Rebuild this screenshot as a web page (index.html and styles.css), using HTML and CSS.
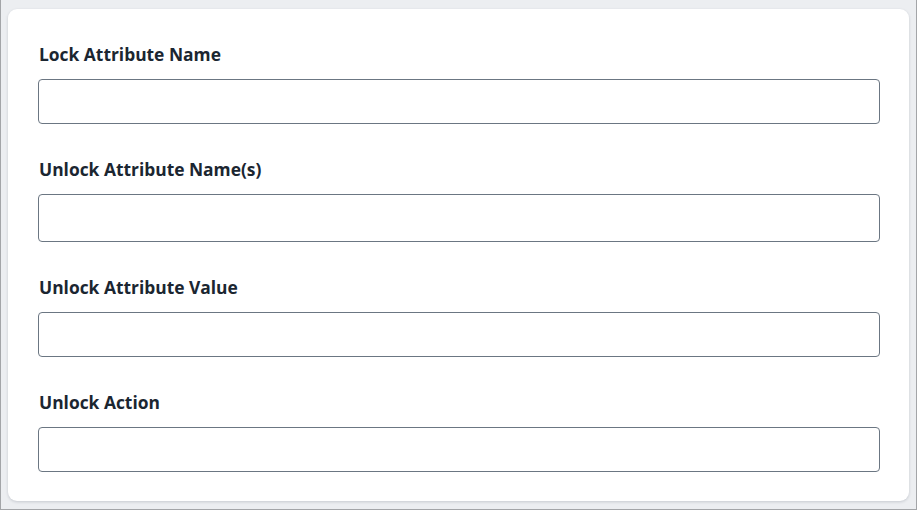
FILE: index.html
```html
<!DOCTYPE html>
<html>
<head>
<meta charset="utf-8">
<link rel="stylesheet" href="styles.css">
</head>
<body>
<div class="frame">
  <div class="card">
    <div class="field">
      <label class="label">Lock Attribute Name</label>
      <input class="input" type="text">
    </div>
    <div class="field">
      <label class="label">Unlock Attribute Name(s)</label>
      <input class="input tall" type="text">
    </div>
    <div class="field">
      <label class="label">Unlock Attribute Value</label>
      <input class="input" type="text">
    </div>
    <div class="field">
      <label class="label">Unlock Action</label>
      <input class="input" type="text">
    </div>
  </div>
</div>
</body>
</html>
```

FILE: styles.css
```css
html, body {
  margin: 0;
  padding: 0;
  background: #ffffff;
}
.frame {
  box-sizing: border-box;
  width: 917px;
  height: 510px;
  background: #eceef1;
  border-left: 1px solid #a3a5a8;
  border-right: 1px solid #a3a5a8;
  border-bottom: 1px solid #a3a5a8;
  padding: 9px 7px 0 7px;
}
.card {
  box-sizing: border-box;
  width: 901px;
  height: 492px;
  background: #ffffff;
  border-radius: 9px;
  box-shadow: 0 1px 3px rgba(30, 40, 60, 0.18);
  padding: 33px 29px 0 30px;
  display: flex;
  flex-direction: column;
  gap: 33px;
}
.field {
  display: flex;
  flex-direction: column;
}
.label {
  font-family: "Open Sans", "Noto Sans", sans-serif;
  font-weight: 700;
  font-size: 17.4px;
  line-height: 24px;
  color: #1b2631;
  margin-bottom: 13px;
  margin-left: 1px;
}
.input {
  box-sizing: border-box;
  width: 842px;
  height: 45px;
  border: 1px solid #6b7682;
  border-radius: 4px;
  background: #ffffff;
  margin: 0;
  padding: 0 12px;
  font-size: 16px;
  outline: none;
}
.input.tall {
  height: 48px;
}
```
